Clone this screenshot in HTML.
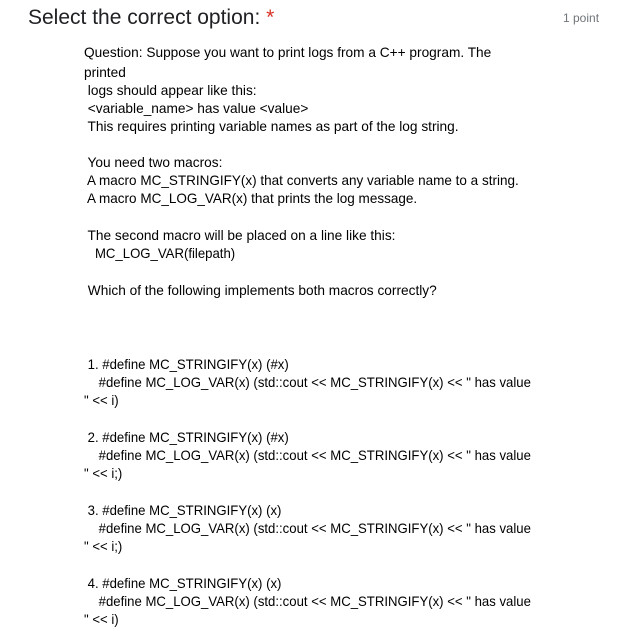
<!DOCTYPE html>
<html><head><meta charset="utf-8"><style>
body{margin:0;background:#fff;width:620px;height:639px;position:relative;overflow:hidden;font-family:"Liberation Sans",sans-serif;color:#000}
.t{position:absolute;left:28px;top:6px;font-size:21px;color:#202124;white-space:nowrap}
.t span{color:#d93025}
.p{position:absolute;left:563px;top:11px;font-size:12px;color:#70757a}
.l{position:absolute;font-size:14px;white-space:pre;transform:scaleX(0.977);transform-origin:left;line-height:18px}
.l.c{transform:scaleX(0.94)}
.l.d{transform:scaleX(0.965)}
</style></head><body>
<div class="t">Select the correct option: <span>*</span></div>
<div class="p">1 point</div>
<div class="l" style="left:84px;top:43px">Question: Suppose you want to print logs from a C++ program. The</div>
<div class="l" style="left:84px;top:63px">printed</div>
<div class="l" style="left:84px;top:81px"> logs should appear like this:</div>
<div class="l" style="left:84px;top:99px"> &lt;variable_name&gt; has value &lt;value&gt;</div>
<div class="l" style="left:84px;top:117px"> This requires printing variable names as part of the log string.</div>
<div class="l" style="left:84px;top:153px"> You need two macros:</div>
<div class="l d" style="left:84px;top:171px"> A macro MC_STRINGIFY(x) that converts any variable name to a string.</div>
<div class="l d" style="left:84px;top:189px"> A macro MC_LOG_VAR(x) that prints the log message.</div>
<div class="l" style="left:84px;top:226px"> The second macro will be placed on a line like this:</div>
<div class="l c" style="left:84px;top:244px">   MC_LOG_VAR(filepath)</div>
<div class="l" style="left:84px;top:281px"> Which of the following implements both macros correctly?</div>
<div class="l c" style="left:84px;top:355px"> 1. #define MC_STRINGIFY(x) (#x)</div>
<div class="l c" style="left:84px;top:373px">    #define MC_LOG_VAR(x) (std::cout &lt;&lt; MC_STRINGIFY(x) &lt;&lt; " has value</div>
<div class="l c" style="left:84px;top:391px">" &lt;&lt; i)</div>
<div class="l c" style="left:84px;top:428px"> 2. #define MC_STRINGIFY(x) (#x)</div>
<div class="l c" style="left:84px;top:446px">    #define MC_LOG_VAR(x) (std::cout &lt;&lt; MC_STRINGIFY(x) &lt;&lt; " has value</div>
<div class="l c" style="left:84px;top:464px">" &lt;&lt; i;)</div>
<div class="l c" style="left:84px;top:501px"> 3. #define MC_STRINGIFY(x) (x)</div>
<div class="l c" style="left:84px;top:519px">    #define MC_LOG_VAR(x) (std::cout &lt;&lt; MC_STRINGIFY(x) &lt;&lt; " has value</div>
<div class="l c" style="left:84px;top:537px">" &lt;&lt; i;)</div>
<div class="l c" style="left:84px;top:574px"> 4. #define MC_STRINGIFY(x) (x)</div>
<div class="l c" style="left:84px;top:592px">    #define MC_LOG_VAR(x) (std::cout &lt;&lt; MC_STRINGIFY(x) &lt;&lt; " has value</div>
<div class="l c" style="left:84px;top:610px">" &lt;&lt; i)</div>
</body></html>
